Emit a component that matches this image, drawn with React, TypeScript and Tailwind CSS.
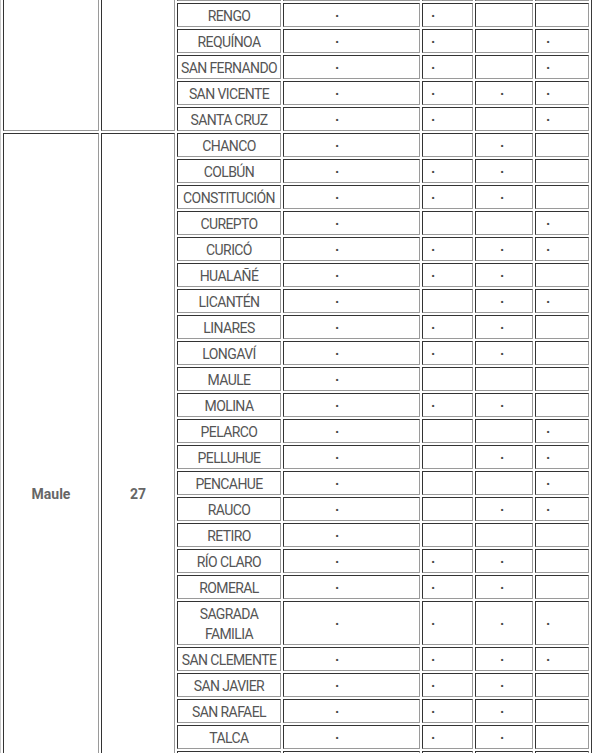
import { useLayoutEffect, useRef } from "react";

type Commune = { name: string; marks: [boolean, boolean, boolean, boolean] };
type Region = { name: string; count: number; communes: Commune[] };

const c = (name: string, m: string): Commune => ({
  name,
  marks: [m[0] === "x", m[1] === "x", m[2] === "x", m[3] === "x"],
});

const regions: Region[] = [
  {
    name: "O'Higgins",
    count: 33,
    communes: [
      c("CHÉPICA", "xx-x"),
      c("CHIMBARONGO", "xxx-"),
      c("CODEGUA", "x---"),
      c("COINCO", "x-x-"),
      c("COLTAUCO", "xx--"),
      c("DOÑIHUE", "xx-x"),
      c("GRANEROS", "xxx-"),
      c("LA ESTRELLA", "x---"),
      c("LAS CABRAS", "xx-x"),
      c("LITUECHE", "x-x-"),
      c("LOLOL", "x--x"),
      c("MACHALÍ", "xx--"),
      c("MALLOA", "xx-x"),
      c("MARCHIGÜE", "x--x"),
      c("MOSTAZAL", "xx--"),
      c("NANCAGUA", "xx-x"),
      c("NAVIDAD", "x---"),
      c("OLIVAR", "xx--"),
      c("PALMILLA", "x--x"),
      c("PAREDONES", "x-x-"),
      c("PERALILLO", "xx-x"),
      c("PEUMO", "xx--"),
      c("PICHIDEGUA", "xx-x"),
      c("PICHILEMU", "xxxx"),
      c("PLACILLA", "x--x"),
      c("PUMANQUE", "x---"),
      c("QUINTA DE TILCOCO", "xx--"),
      c("RANCAGUA", "xxxx"),
      c("RENGO", "xx--"),
      c("REQUÍNOA", "xx-x"),
      c("SAN FERNANDO", "xx-x"),
      c("SAN VICENTE", "xxxx"),
      c("SANTA CRUZ", "xx-x"),
    ],
  },
  {
    name: "Maule",
    count: 27,
    communes: [
      c("CHANCO", "x-x-"),
      c("COLBÚN", "xxx-"),
      c("CONSTITUCIÓN", "xxx-"),
      c("CUREPTO", "x--x"),
      c("CURICÓ", "xxxx"),
      c("HUALAÑÉ", "xxx-"),
      c("LICANTÉN", "x-xx"),
      c("LINARES", "xxx-"),
      c("LONGAVÍ", "xxx-"),
      c("MAULE", "x---"),
      c("MOLINA", "xxx-"),
      c("PELARCO", "x--x"),
      c("PELLUHUE", "x-xx"),
      c("PENCAHUE", "x--x"),
      c("RAUCO", "x-xx"),
      c("RETIRO", "x---"),
      c("RÍO CLARO", "xxx-"),
      c("ROMERAL", "xxx-"),
      c("SAGRADA FAMILIA", "xxxx"),
      c("SAN CLEMENTE", "xxxx"),
      c("SAN JAVIER", "xxx-"),
      c("SAN RAFAEL", "xxx-"),
      c("TALCA", "xxx-"),
      c("TENO", "xxx-"),
      c("VICHUQUÉN", "x--x"),
      c("VILLA ALEGRE", "xxx-"),
      c("YERBAS BUENAS", "xxx-"),
    ],
  },
];

const cell = "border border-t-[#333] border-l-[#333] border-r-[#9a9a9a] border-b-[#9a9a9a] px-px pt-[2px] pb-0 leading-5";
// widths for the 7 columns (border-box)
const widths = ["w-[96px]", "w-[74px]", "w-[104px]", "w-[137px]", "w-[51px]", "w-[58px]", "w-[54px]"];
// the dot in each mark column does not sit in the middle of its cell
const dotPad = ["pl-[51px]", "pl-[8px]", "pl-[24px]", "pl-[10px]"];

export default function App() {
  const boxRef = useRef<HTMLDivElement>(null);
  const anchorRef = useRef<HTMLTableCellElement>(null);

  useLayoutEffect(() => {
    const box = boxRef.current;
    const anchor = anchorRef.current;
    if (!box || !anchor) return;
    // open the list scrolled to RENGO, like the page was
    box.scrollTop = anchor.getBoundingClientRect().top - box.getBoundingClientRect().top - 3;
  }, []);

  let firstRow = true;

  return (
    <div ref={boxRef} className="h-[753px] w-[593px] overflow-hidden bg-white font-[Roboto,sans-serif] text-[14px] text-[#555]">
      <table className="w-[592px] table-fixed border-separate border-spacing-[2px] border border-t-[#c8c8c8] border-l-[#c8c8c8] border-r-[#3a3a3a] border-b-[#3a3a3a]">
        <tbody>
          {regions.map((region) =>
            region.communes.map((commune, i) => {
              const isFirst = firstRow;
              firstRow = false;
              const long = commune.name.length > 14;
              return (
                <tr key={region.name + commune.name}>
                  {i === 0 && (
                    <>
                      <td rowSpan={region.communes.length} className={`${cell} ${isFirst ? widths[0] : ""} text-center font-bold text-[#666]`}>
                        {region.name}
                      </td>
                      <td rowSpan={region.communes.length} className={`${cell} ${isFirst ? widths[1] : ""} text-center font-bold text-[#666]`}>
                        {region.count}
                      </td>
                    </>
                  )}
                  <td
                    ref={commune.name === "RENGO" ? anchorRef : undefined}
                    className={`${cell} ${isFirst ? widths[2] : ""} ${long ? "" : "whitespace-nowrap"} overflow-hidden text-center tracking-[-0.6px]`}
                  >
                    {commune.name}
                  </td>
                  {commune.marks.map((on, k) => (
                    <td key={k} className={`${cell} ${isFirst ? widths[k + 3] : ""} text-left ${dotPad[k]} font-bold text-[#444]`}>
                      {on ? "·" : ""}
                    </td>
                  ))}
                </tr>
              );
            }),
          )}
        </tbody>
      </table>
    </div>
  );
}
